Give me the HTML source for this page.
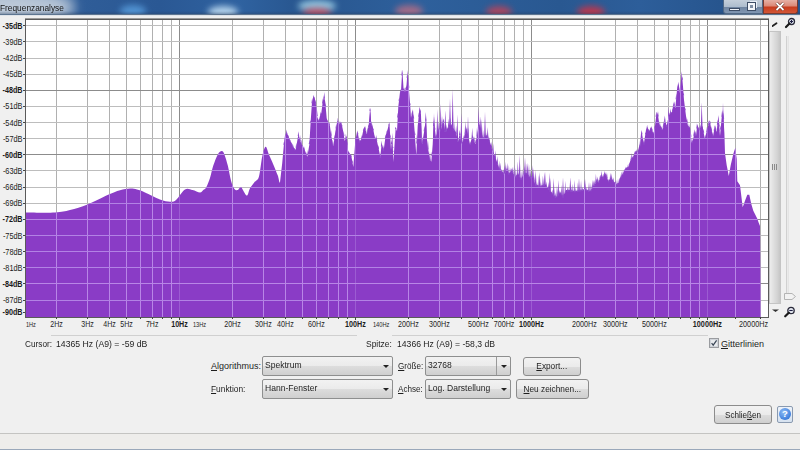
<!DOCTYPE html>
<html><head><meta charset="utf-8">
<style>
html,body{margin:0;padding:0;}
body{width:800px;height:450px;overflow:hidden;position:relative;background:#f0f0f0;font-family:"Liberation Sans",sans-serif;color:#1e1e1e;}
.abs{position:absolute;}
#title{left:0;top:0;width:800px;height:15px;overflow:hidden;
 background:linear-gradient(90deg,#9fb3ca 0px,#6f90b8 55px,#2f5d98 80px,#2a5894 160px,#2f62a0 240px,#28568f 300px,#2e609c 420px,#295891 560px,#2d5e9a 640px,#27558e 720px);}
#title .t{left:0px;top:2.6px;font-size:9px;color:#151515;white-space:nowrap;transform:scaleX(.925);transform-origin:0 0;}
.blob{position:absolute;border-radius:50%;filter:blur(4px);}
.lbl{position:absolute;font-size:9px;white-space:pre;color:#1e1e1e;}
.combo{position:absolute;box-sizing:border-box;border:1px solid #8e8f8f;border-radius:2px;background:linear-gradient(#f2f2f2 0%,#ebebeb 50%,#dddddd 51%,#cfcfcf 100%);}
.combo .v{position:absolute;left:2px;top:3px;font-size:9.2px;white-space:pre;color:#1e1e1e;transform:scaleX(.93);transform-origin:0 0;}
.combo .arr{position:absolute;right:3px;top:8px;width:0;height:0;border-left:3px solid transparent;border-right:3px solid transparent;border-top:3px solid #222;}
.btn{position:absolute;box-sizing:border-box;border:1px solid #8c8c8c;border-radius:3px;background:linear-gradient(#f2f2f2 0%,#ebebeb 50%,#dddddd 51%,#cfcfcf 100%);font-size:9px;text-align:center;color:#1e1e1e;white-space:pre;}
u{text-decoration:underline;text-underline-offset:1px;text-decoration-thickness:1px;}
</style></head>
<body>
<div id="title" class="abs">
 <div class="blob" style="left:-20px;top:-6px;width:95px;height:26px;background:#c4cfdc;opacity:.85;filter:blur(6px)"></div>
 <div class="blob" style="left:120px;top:5px;width:26px;height:12px;background:#5aa0e0;opacity:.8;filter:blur(3px)"></div>
 <div class="blob" style="left:208px;top:6px;width:30px;height:12px;background:#c8e4f8;opacity:.85;filter:blur(3px)"></div>
 <div class="blob" style="left:298px;top:0px;width:38px;height:12px;background:#a8dcf0;opacity:.8;filter:blur(3px)"></div>
 <div class="blob" style="left:303px;top:8px;width:28px;height:10px;background:#d04858;opacity:.8;filter:blur(3px)"></div>
 <div class="blob" style="left:395px;top:5px;width:28px;height:12px;background:#d07080;opacity:.7;filter:blur(3px)"></div>
 <div class="blob" style="left:486px;top:6px;width:26px;height:12px;background:#d04050;opacity:.75;filter:blur(3px)"></div>
 <div class="blob" style="left:577px;top:6px;width:28px;height:12px;background:#d83040;opacity:.8;filter:blur(3px)"></div>
 <div class="abs" style="left:0;top:11px;width:800px;height:4px;background:linear-gradient(rgba(40,60,90,0),rgba(40,60,90,.45));"></div>
 <div class="abs t">Frequenzanalyse</div>
 <div class="abs" style="left:723px;top:0;width:40px;height:14px;box-sizing:border-box;border:1px solid #506885;border-top:none;border-radius:0 0 0 3px;background:linear-gradient(#c3ceda,#aebdce 50%,#6f84a0 52%,#8096b2);"></div>
 <div class="abs" style="left:729px;top:8px;width:9px;height:1px;background:#eef2f8;border:1px solid #3d4d66;"></div>
 <div class="abs" style="left:750px;top:1px;width:7px;height:7px;box-sizing:border-box;border:1px solid #e8eef6;"></div>
 <div class="abs" style="left:748px;top:3px;width:7px;height:7px;box-sizing:border-box;border:2px solid #f4f6fa;background:#7f8ea4;box-shadow:0 0 0 1px #3d4d66;"></div>
 <div class="abs" style="left:763px;top:0;width:35px;height:14px;box-sizing:border-box;border:1px solid #7a3a30;border-top:none;border-radius:0 0 3px 0;background:linear-gradient(#e5b0a4,#dc8a78 45%,#c83c1e 55%,#d25636);"></div>
 <svg class="abs" style="left:775px;top:2px" width="10" height="9" viewBox="0 0 10 9"><path d="M1.5,1 L8.5,8 M8.5,1 L1.5,8" stroke="#5a2418" stroke-width="3"/><path d="M1.5,1 L8.5,8 M8.5,1 L1.5,8" stroke="#fff" stroke-width="1.8"/></svg>
</div>
<div class="abs" style="left:0;top:14px;width:800px;height:1px;background:#5d7590"></div>
<div class="abs" style="left:0;top:15px;width:800px;height:1px;background:#dfe4ea"></div>

<svg class="abs" style="left:0;top:0" width="800" height="450" viewBox="0 0 800 450" font-family="Liberation Sans" font-size="8">
 <defs><clipPath id="spec"><path d="M25.5,317.0 L26.00,212.50 C30.83,212.50 47.67,212.92 55.00,212.50 C62.33,212.08 64.58,211.33 70.00,210.00 C75.42,208.67 81.25,207.00 87.50,204.50 C93.75,202.00 102.08,197.38 107.50,195.00 C112.92,192.62 116.25,191.27 120.00,190.20 C123.75,189.13 127.17,188.70 130.00,188.60 C132.83,188.50 134.50,188.95 137.00,189.60 C139.50,190.25 141.17,190.85 145.00,192.50 C148.83,194.15 155.83,197.96 160.00,199.50 C164.17,201.04 167.33,201.67 170.00,201.75 C172.67,201.83 173.50,202.04 176.00,200.00 C178.50,197.96 182.25,191.17 185.00,189.50 C187.75,187.83 190.00,189.50 192.50,190.00 C195.00,190.50 198.20,192.50 200.00,192.50 C201.80,192.50 202.30,190.78 203.30,190.00 C204.30,189.22 204.88,189.80 206.00,187.80 C207.12,185.80 208.78,181.70 210.00,178.00 C211.22,174.30 212.00,169.53 213.30,165.60 C214.60,161.67 216.38,156.82 217.80,154.40 C219.22,151.98 220.70,151.10 221.80,151.10 C222.90,151.10 223.40,151.98 224.40,154.40 C225.40,156.82 226.68,161.15 227.80,165.60 C228.92,170.05 230.00,177.22 231.10,181.10 C232.20,184.98 233.28,187.42 234.40,188.90 C235.52,190.38 236.68,190.27 237.80,190.00 C238.92,189.73 239.62,186.37 241.10,187.30 C242.58,188.23 245.22,195.45 246.70,195.60 C248.18,195.75 248.72,190.43 250.00,188.20 C251.28,185.97 252.92,184.12 254.40,182.20 C255.88,180.28 257.60,180.95 258.90,176.70 C260.20,172.45 261.08,161.70 262.20,156.70 C263.32,151.70 264.48,147.08 265.60,146.70 C266.72,146.32 267.62,151.45 268.90,154.40 C270.18,157.35 271.82,160.87 273.30,164.40 C274.78,167.93 276.68,172.63 277.80,175.60 C278.92,178.57 279.27,184.25 280.00,182.20 L282.20,163.30 L284.40,138.90 L286.70,132.20 L290.00,140.00 L293.30,146.70 L295.60,150.00 L298.40,134.40 L301.10,143.30 L304.40,148.90 L307.30,156.70 L309.30,145.00 L310.70,121.00 L312.00,102.30 L313.30,96.30 L314.70,97.70 L316.00,105.00 L317.30,117.00 L318.70,121.00 L320.00,115.70 L321.30,113.00 L322.70,102.30 L324.00,95.70 L325.30,102.30 L326.70,118.30 L328.00,122.30 L329.60,123.70 L331.30,135.70 L333.30,146.30 L335.30,131.70 L337.30,121.00 L339.30,123.70 L341.30,122.30 L343.30,131.70 L344.70,141.00 L346.70,135.70 L348.00,150.30 L349.30,153.00 L351.30,155.70 L353.30,167.00 L355.30,141.00 L357.30,130.30 L359.30,141.00 L361.30,139.70 L363.30,130.30 L364.70,126.30 L366.70,134.30 L368.70,125.00 L370.00,109.00 L371.30,123.70 L372.70,126.30 L374.70,137.00 L376.70,139.70 L378.70,149.00 L380.30,156.70 L381.70,143.30 L383.70,150.00 L385.70,135.30 L387.70,129.00 L389.40,122.00 L391.00,150.00 L392.30,132.70 L393.40,162.00 L395.70,127.30 L397.00,131.30 L398.30,106.70 L400.00,92.00 L401.00,90.70 L402.30,69.50 L403.50,88.00 L405.00,92.00 L406.50,85.00 L407.70,70.00 L408.50,84.00 L410.30,106.70 L411.00,118.00 L413.00,110.00 L414.50,130.00 L416.30,155.30 L417.70,126.00 L419.70,107.00 L421.00,115.00 L422.00,144.30 L424.00,132.30 L426.00,117.70 L427.00,140.00 L428.00,148.30 L430.00,159.00 L431.30,161.70 L432.70,144.30 L434.00,116.30 L435.00,130.00 L436.00,137.70 L438.70,128.30 L440.70,131.00 L443.30,119.00 L445.30,132.30 L448.00,127.00 L450.70,123.00 L453.30,128.30 L456.00,132.30 L458.00,141.70 L460.00,132.30 L461.30,144.30 L464.00,137.70 L466.70,128.30 L470.00,144.30 L472.70,135.00 L475.30,144.30 L477.30,133.70 L479.30,124.00 L481.00,131.00 L483.00,137.70 L486.30,135.00 L488.30,137.70 L490.30,143.00 L492.30,149.70 L495.00,156.00 L497.00,162.00 L499.00,168.00 L502.00,171.00 L504.30,174.00 L507.00,168.00 L509.00,173.30 L512.00,170.00 L515.00,177.00 L518.00,173.00 L521.00,178.70 L524.00,173.30 L527.00,173.00 L530.00,177.30 L533.00,176.00 L535.00,184.00 L540.00,186.00 L545.00,184.00 L550.00,190.00 L553.00,194.00 L556.00,197.00 L560.00,192.00 L563.00,196.00 L566.00,190.00 L570.00,190.00 L575.00,191.00 L580.00,190.00 L585.00,189.00 L590.00,191.00 L595.00,184.00 L597.00,178.70 L598.30,182.70 L601.00,174.70 L603.00,177.30 L604.30,173.30 L606.30,174.70 L608.30,181.30 L611.00,177.30 L613.70,181.30 L616.30,184.00 L618.30,182.70 L620.30,177.30 L623.00,173.30 L625.70,168.00 L628.30,166.70 L631.00,158.70 L633.70,156.00 L635.70,150.70 L637.70,152.00 L639.70,144.00 L640.00,145.70 L641.30,129.70 L642.70,137.70 L644.00,143.00 L646.00,129.70 L647.30,127.00 L649.30,131.00 L651.30,126.30 L653.30,133.70 L654.70,128.30 L656.70,111.70 L658.00,115.00 L659.30,124.30 L661.30,127.00 L662.70,129.70 L664.70,119.00 L666.70,125.70 L668.70,116.30 L670.00,112.30 L672.00,112.30 L674.00,103.00 L675.30,108.30 L677.30,86.70 L678.70,84.00 L680.00,93.30 L681.70,71.30 L683.00,86.70 L684.00,100.00 L686.00,116.00 L688.00,125.70 L690.00,127.50 L691.60,142.70 L693.30,138.70 L694.70,129.30 L696.00,136.00 L697.30,124.00 L699.30,130.70 L701.00,125.00 L702.70,126.70 L704.70,138.70 L707.30,129.30 L709.70,120.00 L711.30,129.30 L713.30,136.00 L714.70,125.30 L716.70,132.00 L718.30,116.00 L720.00,136.00 L721.70,117.30 L723.00,110.00 L724.40,133.30 L725.00,153.30 L726.70,165.30 L728.80,176.00 L730.70,165.30 L733.30,154.00 L735.20,148.00 L736.70,158.70 L737.30,181.30 L740.00,185.30 L742.70,207.30 L745.30,200.00 L747.30,194.70 L749.30,194.70 L751.30,204.00 L753.30,210.70 L755.30,214.70 L757.30,218.70 L758.70,222.70 L760.00,226.00 L760.5,317.0 Z"/></clipPath></defs>
 <rect x="25.5" y="19" width="743" height="298" fill="#ffffff"/>
 <g stroke-width="1">
<line x1="56.5" y1="19.0" x2="56.5" y2="317.0" stroke="#b0b0b0"/>
<line x1="87.5" y1="19.0" x2="87.5" y2="317.0" stroke="#b0b0b0"/>
<line x1="109.5" y1="19.0" x2="109.5" y2="317.0" stroke="#b0b0b0"/>
<line x1="126.5" y1="19.0" x2="126.5" y2="317.0" stroke="#b0b0b0"/>
<line x1="140.5" y1="19.0" x2="140.5" y2="317.0" stroke="#b0b0b0"/>
<line x1="152.5" y1="19.0" x2="152.5" y2="317.0" stroke="#b0b0b0"/>
<line x1="162.5" y1="19.0" x2="162.5" y2="317.0" stroke="#b0b0b0"/>
<line x1="171.5" y1="19.0" x2="171.5" y2="317.0" stroke="#b0b0b0"/>
<line x1="179.5" y1="19.0" x2="179.5" y2="317.0" stroke="#8c8c8c"/>
<line x1="232.5" y1="19.0" x2="232.5" y2="317.0" stroke="#b0b0b0"/>
<line x1="263.5" y1="19.0" x2="263.5" y2="317.0" stroke="#b0b0b0"/>
<line x1="285.5" y1="19.0" x2="285.5" y2="317.0" stroke="#b0b0b0"/>
<line x1="302.5" y1="19.0" x2="302.5" y2="317.0" stroke="#b0b0b0"/>
<line x1="316.5" y1="19.0" x2="316.5" y2="317.0" stroke="#b0b0b0"/>
<line x1="328.5" y1="19.0" x2="328.5" y2="317.0" stroke="#b0b0b0"/>
<line x1="338.5" y1="19.0" x2="338.5" y2="317.0" stroke="#b0b0b0"/>
<line x1="347.5" y1="19.0" x2="347.5" y2="317.0" stroke="#b0b0b0"/>
<line x1="355.5" y1="19.0" x2="355.5" y2="317.0" stroke="#8c8c8c"/>
<line x1="408.5" y1="19.0" x2="408.5" y2="317.0" stroke="#b0b0b0"/>
<line x1="439.5" y1="19.0" x2="439.5" y2="317.0" stroke="#b0b0b0"/>
<line x1="461.5" y1="19.0" x2="461.5" y2="317.0" stroke="#b0b0b0"/>
<line x1="478.5" y1="19.0" x2="478.5" y2="317.0" stroke="#b0b0b0"/>
<line x1="492.5" y1="19.0" x2="492.5" y2="317.0" stroke="#b0b0b0"/>
<line x1="504.5" y1="19.0" x2="504.5" y2="317.0" stroke="#b0b0b0"/>
<line x1="514.5" y1="19.0" x2="514.5" y2="317.0" stroke="#b0b0b0"/>
<line x1="523.5" y1="19.0" x2="523.5" y2="317.0" stroke="#b0b0b0"/>
<line x1="531.5" y1="19.0" x2="531.5" y2="317.0" stroke="#8c8c8c"/>
<line x1="584.5" y1="19.0" x2="584.5" y2="317.0" stroke="#b0b0b0"/>
<line x1="615.5" y1="19.0" x2="615.5" y2="317.0" stroke="#b0b0b0"/>
<line x1="637.5" y1="19.0" x2="637.5" y2="317.0" stroke="#b0b0b0"/>
<line x1="654.5" y1="19.0" x2="654.5" y2="317.0" stroke="#b0b0b0"/>
<line x1="668.5" y1="19.0" x2="668.5" y2="317.0" stroke="#b0b0b0"/>
<line x1="680.5" y1="19.0" x2="680.5" y2="317.0" stroke="#b0b0b0"/>
<line x1="690.5" y1="19.0" x2="690.5" y2="317.0" stroke="#b0b0b0"/>
<line x1="699.5" y1="19.0" x2="699.5" y2="317.0" stroke="#b0b0b0"/>
<line x1="707.5" y1="19.0" x2="707.5" y2="317.0" stroke="#8c8c8c"/>
<line x1="760.5" y1="19.0" x2="760.5" y2="317.0" stroke="#b0b0b0"/>
<line x1="735.5" y1="19.0" x2="735.5" y2="317.0" stroke="#b0b0b0"/>
<line x1="25.5" y1="25.5" x2="768.5" y2="25.5" stroke="#bdbdbd"/>
<line x1="25.5" y1="41.5" x2="768.5" y2="41.5" stroke="#bdbdbd"/>
<line x1="25.5" y1="58.5" x2="768.5" y2="58.5" stroke="#bdbdbd"/>
<line x1="25.5" y1="74.5" x2="768.5" y2="74.5" stroke="#bdbdbd"/>
<line x1="25.5" y1="90.5" x2="768.5" y2="90.5" stroke="#8c8c8c"/>
<line x1="25.5" y1="106.5" x2="768.5" y2="106.5" stroke="#bdbdbd"/>
<line x1="25.5" y1="122.5" x2="768.5" y2="122.5" stroke="#bdbdbd"/>
<line x1="25.5" y1="138.5" x2="768.5" y2="138.5" stroke="#bdbdbd"/>
<line x1="25.5" y1="154.5" x2="768.5" y2="154.5" stroke="#8c8c8c"/>
<line x1="25.5" y1="170.5" x2="768.5" y2="170.5" stroke="#bdbdbd"/>
<line x1="25.5" y1="187.5" x2="768.5" y2="187.5" stroke="#bdbdbd"/>
<line x1="25.5" y1="203.5" x2="768.5" y2="203.5" stroke="#bdbdbd"/>
<line x1="25.5" y1="219.5" x2="768.5" y2="219.5" stroke="#8c8c8c"/>
<line x1="25.5" y1="235.5" x2="768.5" y2="235.5" stroke="#bdbdbd"/>
<line x1="25.5" y1="251.5" x2="768.5" y2="251.5" stroke="#bdbdbd"/>
<line x1="25.5" y1="267.5" x2="768.5" y2="267.5" stroke="#bdbdbd"/>
<line x1="25.5" y1="283.5" x2="768.5" y2="283.5" stroke="#8c8c8c"/>
<line x1="25.5" y1="300.5" x2="768.5" y2="300.5" stroke="#bdbdbd"/>
 </g>
 <path d="M25.5,317.0 L26.00,212.50 C30.83,212.50 47.67,212.92 55.00,212.50 C62.33,212.08 64.58,211.33 70.00,210.00 C75.42,208.67 81.25,207.00 87.50,204.50 C93.75,202.00 102.08,197.38 107.50,195.00 C112.92,192.62 116.25,191.27 120.00,190.20 C123.75,189.13 127.17,188.70 130.00,188.60 C132.83,188.50 134.50,188.95 137.00,189.60 C139.50,190.25 141.17,190.85 145.00,192.50 C148.83,194.15 155.83,197.96 160.00,199.50 C164.17,201.04 167.33,201.67 170.00,201.75 C172.67,201.83 173.50,202.04 176.00,200.00 C178.50,197.96 182.25,191.17 185.00,189.50 C187.75,187.83 190.00,189.50 192.50,190.00 C195.00,190.50 198.20,192.50 200.00,192.50 C201.80,192.50 202.30,190.78 203.30,190.00 C204.30,189.22 204.88,189.80 206.00,187.80 C207.12,185.80 208.78,181.70 210.00,178.00 C211.22,174.30 212.00,169.53 213.30,165.60 C214.60,161.67 216.38,156.82 217.80,154.40 C219.22,151.98 220.70,151.10 221.80,151.10 C222.90,151.10 223.40,151.98 224.40,154.40 C225.40,156.82 226.68,161.15 227.80,165.60 C228.92,170.05 230.00,177.22 231.10,181.10 C232.20,184.98 233.28,187.42 234.40,188.90 C235.52,190.38 236.68,190.27 237.80,190.00 C238.92,189.73 239.62,186.37 241.10,187.30 C242.58,188.23 245.22,195.45 246.70,195.60 C248.18,195.75 248.72,190.43 250.00,188.20 C251.28,185.97 252.92,184.12 254.40,182.20 C255.88,180.28 257.60,180.95 258.90,176.70 C260.20,172.45 261.08,161.70 262.20,156.70 C263.32,151.70 264.48,147.08 265.60,146.70 C266.72,146.32 267.62,151.45 268.90,154.40 C270.18,157.35 271.82,160.87 273.30,164.40 C274.78,167.93 276.68,172.63 277.80,175.60 C278.92,178.57 279.27,184.25 280.00,182.20 L282.20,163.30 L284.40,138.90 L286.70,132.20 L290.00,140.00 L293.30,146.70 L295.60,150.00 L298.40,134.40 L301.10,143.30 L304.40,148.90 L307.30,156.70 L309.30,145.00 L310.70,121.00 L312.00,102.30 L313.30,96.30 L314.70,97.70 L316.00,105.00 L317.30,117.00 L318.70,121.00 L320.00,115.70 L321.30,113.00 L322.70,102.30 L324.00,95.70 L325.30,102.30 L326.70,118.30 L328.00,122.30 L329.60,123.70 L331.30,135.70 L333.30,146.30 L335.30,131.70 L337.30,121.00 L339.30,123.70 L341.30,122.30 L343.30,131.70 L344.70,141.00 L346.70,135.70 L348.00,150.30 L349.30,153.00 L351.30,155.70 L353.30,167.00 L355.30,141.00 L357.30,130.30 L359.30,141.00 L361.30,139.70 L363.30,130.30 L364.70,126.30 L366.70,134.30 L368.70,125.00 L370.00,109.00 L371.30,123.70 L372.70,126.30 L374.70,137.00 L376.70,139.70 L378.70,149.00 L380.30,156.70 L381.70,143.30 L383.70,150.00 L385.70,135.30 L387.70,129.00 L389.40,122.00 L391.00,150.00 L392.30,132.70 L393.40,162.00 L395.70,127.30 L397.00,131.30 L398.30,106.70 L400.00,92.00 L401.00,90.70 L402.30,69.50 L403.50,88.00 L405.00,92.00 L406.50,85.00 L407.70,70.00 L408.50,84.00 L410.30,106.70 L411.00,118.00 L413.00,110.00 L414.50,130.00 L416.30,155.30 L417.70,126.00 L419.70,107.00 L421.00,115.00 L422.00,144.30 L424.00,132.30 L426.00,117.70 L427.00,140.00 L428.00,148.30 L430.00,159.00 L431.30,161.70 L432.70,144.30 L434.00,116.30 L435.00,130.00 L436.00,137.70 L438.70,128.30 L440.70,131.00 L443.30,119.00 L445.30,132.30 L448.00,127.00 L450.70,123.00 L453.30,128.30 L456.00,132.30 L458.00,141.70 L460.00,132.30 L461.30,144.30 L464.00,137.70 L466.70,128.30 L470.00,144.30 L472.70,135.00 L475.30,144.30 L477.30,133.70 L479.30,124.00 L481.00,131.00 L483.00,137.70 L486.30,135.00 L488.30,137.70 L490.30,143.00 L492.30,149.70 L495.00,156.00 L497.00,162.00 L499.00,168.00 L502.00,171.00 L504.30,174.00 L507.00,168.00 L509.00,173.30 L512.00,170.00 L515.00,177.00 L518.00,173.00 L521.00,178.70 L524.00,173.30 L527.00,173.00 L530.00,177.30 L533.00,176.00 L535.00,184.00 L540.00,186.00 L545.00,184.00 L550.00,190.00 L553.00,194.00 L556.00,197.00 L560.00,192.00 L563.00,196.00 L566.00,190.00 L570.00,190.00 L575.00,191.00 L580.00,190.00 L585.00,189.00 L590.00,191.00 L595.00,184.00 L597.00,178.70 L598.30,182.70 L601.00,174.70 L603.00,177.30 L604.30,173.30 L606.30,174.70 L608.30,181.30 L611.00,177.30 L613.70,181.30 L616.30,184.00 L618.30,182.70 L620.30,177.30 L623.00,173.30 L625.70,168.00 L628.30,166.70 L631.00,158.70 L633.70,156.00 L635.70,150.70 L637.70,152.00 L639.70,144.00 L640.00,145.70 L641.30,129.70 L642.70,137.70 L644.00,143.00 L646.00,129.70 L647.30,127.00 L649.30,131.00 L651.30,126.30 L653.30,133.70 L654.70,128.30 L656.70,111.70 L658.00,115.00 L659.30,124.30 L661.30,127.00 L662.70,129.70 L664.70,119.00 L666.70,125.70 L668.70,116.30 L670.00,112.30 L672.00,112.30 L674.00,103.00 L675.30,108.30 L677.30,86.70 L678.70,84.00 L680.00,93.30 L681.70,71.30 L683.00,86.70 L684.00,100.00 L686.00,116.00 L688.00,125.70 L690.00,127.50 L691.60,142.70 L693.30,138.70 L694.70,129.30 L696.00,136.00 L697.30,124.00 L699.30,130.70 L701.00,125.00 L702.70,126.70 L704.70,138.70 L707.30,129.30 L709.70,120.00 L711.30,129.30 L713.30,136.00 L714.70,125.30 L716.70,132.00 L718.30,116.00 L720.00,136.00 L721.70,117.30 L723.00,110.00 L724.40,133.30 L725.00,153.30 L726.70,165.30 L728.80,176.00 L730.70,165.30 L733.30,154.00 L735.20,148.00 L736.70,158.70 L737.30,181.30 L740.00,185.30 L742.70,207.30 L745.30,200.00 L747.30,194.70 L749.30,194.70 L751.30,204.00 L753.30,210.70 L755.30,214.70 L757.30,218.70 L758.70,222.70 L760.00,226.00 L760.5,317.0 Z" fill="#8a3cc6"/>
 <path d="M369.40,125.70 L370.30,108.00 L371.20,125.70 Z M411.40,118.80 L412.30,109.00 L413.20,118.80 Z M418.80,118.50 L419.70,106.70 L420.60,118.50 Z M419.80,137.51 L420.70,110.30 L421.60,137.51 Z M425.10,142.00 L426.00,117.00 L426.90,142.00 Z M433.10,139.84 L434.00,113.00 L434.90,139.84 Z M436.40,138.66 L437.30,109.00 L438.20,138.66 Z M439.80,131.65 L440.70,103.70 L441.60,131.65 Z M444.40,132.34 L445.30,110.30 L446.20,132.34 Z M449.10,127.52 L450.00,98.30 L450.90,127.52 Z M451.80,130.89 L452.70,89.00 L453.60,130.89 Z M456.40,142.29 L457.30,114.30 L458.20,142.29 Z M460.40,143.86 L461.30,113.00 L462.20,143.86 Z M464.40,138.66 L465.30,121.00 L466.20,138.66 Z M467.10,141.45 L468.00,115.70 L468.90,141.45 Z M477.80,133.76 L478.70,107.70 L479.60,133.76 Z M479.40,134.01 L480.30,116.30 L481.20,134.01 Z M480.80,138.69 L481.70,119.00 L482.60,138.69 Z M484.10,138.88 L485.00,111.70 L485.90,138.88 Z M486.80,140.76 L487.70,127.00 L488.60,140.76 Z M491.40,154.03 L492.30,148.00 L493.20,154.03 Z M494.10,161.00 L495.00,154.70 L495.90,161.00 Z M498.10,171.00 L499.00,164.00 L499.90,171.00 Z M503.40,174.70 L504.30,165.30 L505.20,174.70 Z M510.80,173.63 L511.70,168.00 L512.60,173.63 Z M518.80,180.13 L519.70,154.70 L520.60,180.13 Z M524.10,175.30 L525.00,157.30 L525.90,175.30 Z M526.80,177.44 L527.70,162.70 L528.60,177.44 Z M532.80,184.80 L533.70,168.00 L534.60,184.80 Z M534.80,186.68 L535.70,170.00 L536.60,186.68 Z M538.80,187.72 L539.70,172.00 L540.60,187.72 Z M544.10,187.20 L545.00,171.30 L545.90,187.20 Z M548.80,192.93 L549.70,172.70 L550.60,192.93 Z M552.80,197.70 L553.70,178.00 L554.60,197.70 Z M557.40,197.38 L558.30,180.00 L559.20,197.38 Z M562.10,196.67 L563.00,177.30 L563.90,196.67 Z M569.40,192.26 L570.30,177.30 L571.20,192.26 Z M578.10,192.40 L579.00,178.00 L579.90,192.40 Z M584.10,191.40 L585.00,178.70 L585.90,191.40 Z M588.10,193.00 L589.00,182.00 L589.90,193.00 Z M592.80,189.22 L593.70,180.00 L594.60,189.22 Z M667.80,123.00 L668.70,106.70 L669.60,123.00 Z M672.40,112.91 L673.30,101.30 L674.20,112.91 Z M700.80,128.70 L701.70,102.00 L702.60,128.70 Z M722.10,128.64 L723.00,102.70 L723.90,128.64 Z M717.50,130.94 L718.40,114.70 L719.30,130.94 Z" fill="#8a3cc6"/>
 <path d="M283.30,144.84 L284.00,141.38 L284.70,144.84 Z M284.65,137.63 L285.35,132.70 L286.05,137.63 Z M285.92,133.92 L286.62,129.51 L287.32,133.92 Z M287.49,137.22 L288.19,134.96 L288.89,137.22 Z M289.20,141.26 L289.90,139.09 L290.60,141.26 Z M290.83,144.61 L291.53,142.29 L292.23,144.61 Z M292.12,147.23 L292.82,143.32 L293.52,147.23 Z M294.15,150.42 L294.85,147.86 L295.55,150.42 Z M295.57,147.76 L296.27,142.94 L296.97,147.76 Z M297.72,135.96 L298.42,131.36 L299.12,135.96 Z M299.32,141.22 L300.02,134.83 L300.72,141.22 Z M300.56,145.07 L301.26,139.21 L301.96,145.07 Z M302.05,147.60 L302.75,144.95 L303.45,147.60 Z M303.37,149.84 L304.07,146.45 L304.77,149.84 Z M305.39,154.93 L306.09,152.12 L306.79,154.93 Z M307.17,154.88 L307.87,150.01 L308.57,154.88 Z M308.74,144.11 L309.44,139.65 L310.14,144.11 Z M310.00,122.47 L310.70,120.20 L311.40,122.47 Z M311.41,103.30 L312.11,98.24 L312.81,103.30 Z M313.04,98.24 L313.74,94.82 L314.44,98.24 Z M314.82,103.81 L315.52,99.77 L316.22,103.81 Z M316.32,115.92 L317.02,110.35 L317.72,115.92 Z M318.22,121.60 L318.92,118.50 L319.62,121.60 Z M319.99,115.76 L320.69,111.39 L321.39,115.76 Z M322.07,103.45 L322.77,98.16 L323.47,103.45 Z M323.56,98.51 L324.26,92.10 L324.96,98.51 Z M324.88,106.95 L325.58,103.07 L326.28,106.95 Z M326.83,122.36 L327.53,119.68 L328.23,122.36 Z M328.52,124.87 L329.22,122.69 L329.92,124.87 Z M330.39,135.72 L331.09,130.28 L331.79,135.72 Z M332.16,145.48 L332.86,139.54 L333.56,145.48 Z M333.68,139.94 L334.38,134.81 L335.08,139.94 Z M335.47,128.54 L336.17,123.93 L336.87,128.54 Z M337.13,123.21 L337.83,117.43 L338.53,123.21 Z M339.27,124.73 L339.97,120.60 L340.67,124.73 Z M341.14,126.32 L341.84,124.05 L342.54,126.32 Z M343.04,136.11 L343.74,131.19 L344.44,136.11 Z M345.23,139.24 L345.93,133.54 L346.63,139.24 Z M346.72,145.23 L347.42,141.50 L348.12,145.23 Z M348.58,154.47 L349.28,152.37 L349.98,154.47 Z M350.25,156.72 L350.95,153.97 L351.65,156.72 Z M351.56,162.64 L352.26,160.37 L352.96,162.64 Z M353.53,156.40 L354.23,153.82 L354.93,156.40 Z M354.98,140.47 L355.68,136.72 L356.38,140.47 Z M357.05,134.21 L357.75,131.84 L358.45,134.21 Z M358.70,142.44 L359.40,137.96 L360.10,142.44 Z M360.78,140.34 L361.48,134.66 L362.18,140.34 Z M362.85,131.10 L363.55,127.84 L364.25,131.10 Z M364.46,129.65 L365.16,126.03 L365.86,129.65 Z M366.55,133.26 L367.25,126.95 L367.95,133.26 Z M367.90,126.98 L368.60,124.19 L369.30,126.98 Z M369.33,110.83 L370.03,107.78 L370.73,110.83 Z M371.01,125.97 L371.71,121.32 L372.41,125.97 Z M372.48,130.35 L373.18,128.33 L373.88,130.35 Z M374.10,138.63 L374.80,134.97 L375.50,138.63 Z M375.86,141.01 L376.56,134.72 L377.26,141.01 Z M377.75,149.35 L378.45,145.03 L379.15,149.35 Z M379.57,158.06 L380.27,153.01 L380.97,158.06 Z M380.82,146.48 L381.52,140.44 L382.22,146.48 Z M382.80,150.84 L383.50,144.91 L384.20,150.84 Z M384.80,138.26 L385.50,134.49 L386.20,138.26 Z M386.40,132.39 L387.10,129.92 L387.80,132.39 Z M388.24,125.41 L388.94,123.13 L389.64,125.41 Z M389.50,137.54 L390.20,134.60 L390.90,137.54 Z M390.86,143.98 L391.56,140.45 L392.26,143.98 Z M392.12,147.98 L392.82,145.98 L393.52,147.98 Z M393.47,151.90 L394.17,149.45 L394.87,151.90 Z M395.03,128.90 L395.73,126.78 L396.43,128.90 Z M397.11,117.54 L397.81,112.77 L398.51,117.54 Z M398.46,100.81 L399.16,97.67 L399.86,100.81 Z M400.00,92.59 L400.70,88.95 L401.40,92.59 Z M401.33,75.48 L402.03,69.66 L402.73,75.48 Z M403.52,91.42 L404.22,87.32 L404.92,91.42 Z M405.20,89.29 L405.90,86.90 L406.60,89.29 Z M406.50,77.69 L407.20,74.15 L407.90,77.69 Z M407.97,87.63 L408.67,81.90 L409.37,87.63 Z M409.33,104.80 L410.03,102.70 L410.73,104.80 Z M411.48,114.77 L412.18,110.40 L412.88,114.77 Z M412.83,118.54 L413.53,114.10 L414.23,118.54 Z M414.06,135.09 L414.76,130.71 L415.46,135.09 Z M416.23,143.54 L416.93,134.13 L417.63,143.54 Z M418.13,116.77 L418.83,112.18 L419.53,116.77 Z M419.70,112.79 L420.40,108.95 L421.10,112.79 Z M421.67,143.59 L422.37,136.83 L423.07,143.59 Z M423.65,131.26 L424.35,126.12 L425.05,131.26 Z M425.07,120.87 L425.77,111.88 L426.47,120.87 Z M427.26,149.43 L427.96,140.11 L428.66,149.43 Z M429.26,160.30 L429.96,151.25 L430.66,160.30 Z M431.20,155.72 L431.90,151.41 L432.60,155.72 Z M432.92,126.00 L433.62,120.66 L434.32,126.00 Z M434.15,129.42 L434.85,126.70 L435.55,129.42 Z M435.63,138.06 L436.33,133.49 L437.03,138.06 Z M437.52,131.47 L438.22,121.32 L438.92,131.47 Z M439.17,131.38 L439.87,121.38 L440.57,131.38 Z M441.36,126.24 L442.06,116.10 L442.76,126.24 Z M442.92,122.63 L443.62,118.36 L444.32,122.63 Z M444.35,132.12 L445.05,128.04 L445.75,132.12 Z M445.75,131.54 L446.45,124.05 L447.15,131.54 Z M447.85,127.68 L448.55,118.46 L449.25,127.68 Z M449.53,125.19 L450.23,117.47 L450.93,125.19 Z M451.53,127.62 L452.23,124.44 L452.93,127.62 Z M453.39,130.97 L454.09,121.19 L454.79,130.97 Z M455.37,134.15 L456.07,125.64 L456.77,134.15 Z M457.05,142.03 L457.75,138.10 L458.45,142.03 Z M459.04,135.02 L459.74,129.86 L460.44,135.02 Z M461.04,144.72 L461.74,134.45 L462.44,144.72 Z M462.64,140.82 L463.34,135.11 L464.04,140.82 Z M464.78,134.03 L465.48,125.73 L466.18,134.03 Z M466.15,130.55 L466.85,127.03 L467.55,130.55 Z M467.51,137.10 L468.21,127.36 L468.91,137.10 Z M469.51,145.07 L470.21,141.40 L470.91,145.07 Z M471.54,138.09 L472.24,127.75 L472.94,138.09 Z M473.40,141.49 L474.10,136.19 L474.80,141.49 Z M475.14,142.92 L475.84,139.37 L476.54,142.92 Z M476.36,136.48 L477.06,126.21 L477.76,136.48 Z M478.21,127.40 L478.91,120.69 L479.61,127.40 Z M480.34,132.64 L481.04,126.67 L481.74,132.64 Z M482.41,139.11 L483.11,130.00 L483.81,139.11 Z M483.82,137.95 L484.52,133.44 L485.22,137.95 Z M485.32,136.73 L486.02,132.31 L486.72,136.73 Z M487.10,138.53 L487.80,133.96 L488.50,138.53 Z M488.72,142.18 L489.42,137.23 L490.12,142.18 Z M490.83,148.63 L491.53,141.24 L492.23,148.63 Z M492.49,153.28 L493.19,143.36 L493.89,153.28 Z M494.60,158.39 L495.30,150.26 L496.00,158.39 Z M496.71,164.74 L497.41,155.72 L498.11,164.74 Z M498.45,169.65 L499.15,160.39 L499.85,169.65 Z M499.66,170.86 L500.36,162.52 L501.06,170.86 Z M501.05,172.25 L501.75,168.70 L502.45,172.25 Z M503.05,174.78 L503.75,169.38 L504.45,174.78 Z M504.72,173.01 L505.42,161.54 L506.12,173.01 Z M506.48,169.97 L507.18,162.88 L507.88,169.97 Z M508.19,174.52 L508.89,164.91 L509.59,174.52 Z M510.18,172.73 L510.88,168.07 L511.58,172.73 Z M511.94,172.99 L512.64,166.76 L513.34,172.99 Z M513.42,176.44 L514.12,164.44 L514.82,176.44 Z M515.12,177.40 L515.82,167.72 L516.52,177.40 Z M517.08,174.79 L517.78,161.25 L518.48,174.79 Z M518.73,177.21 L519.43,166.97 L520.13,177.21 Z M520.43,179.96 L521.13,170.83 L521.83,179.96 Z M522.33,176.55 L523.03,168.08 L523.73,176.55 Z M524.06,174.72 L524.76,165.97 L525.46,174.72 Z M526.20,174.51 L526.90,163.32 L527.60,174.51 Z M528.28,177.33 L528.98,163.47 L529.68,177.33 Z M529.74,178.61 L530.44,168.96 L531.14,178.61 Z M531.88,177.68 L532.58,164.94 L533.28,177.68 Z M533.22,181.17 L533.92,176.33 L534.62,181.17 Z M534.86,185.72 L535.56,181.43 L536.26,185.72 Z M536.30,186.30 L537.00,182.00 L537.70,186.30 Z M538.17,187.05 L538.87,174.92 L539.57,187.05 Z M540.27,187.11 L540.97,181.91 L541.67,187.11 Z M542.18,186.35 L542.88,175.58 L543.58,186.35 Z M543.52,185.81 L544.22,172.60 L544.92,185.81 Z M545.69,187.17 L546.39,181.26 L547.09,187.17 Z M547.84,189.75 L548.54,181.87 L549.24,189.75 Z M549.53,191.81 L550.23,177.42 L550.93,191.81 Z M551.56,194.52 L552.26,189.24 L552.96,194.52 Z M553.20,196.40 L553.90,187.22 L554.60,196.40 Z M554.74,197.94 L555.44,192.28 L556.14,197.94 Z M556.25,197.31 L556.95,185.86 L557.65,197.31 Z M557.47,195.78 L558.17,186.19 L558.87,195.78 Z M559.11,193.73 L559.81,190.03 L560.51,193.73 Z M560.65,195.29 L561.35,184.93 L562.05,195.29 Z M562.36,197.39 L563.06,193.18 L563.76,197.39 Z M564.54,193.02 L565.24,180.84 L565.94,193.02 Z M566.71,191.50 L567.41,186.85 L568.11,191.50 Z M568.18,191.50 L568.88,187.56 L569.58,191.50 Z M570.16,191.67 L570.86,185.20 L571.56,191.67 Z M571.49,191.94 L572.19,183.79 L572.89,191.94 Z M573.60,192.36 L574.30,179.85 L575.00,192.36 Z M575.06,192.35 L575.76,187.21 L576.46,192.35 Z M577.18,191.92 L577.88,182.15 L578.58,191.92 Z M579.08,191.54 L579.78,187.06 L580.48,191.54 Z M580.34,191.29 L581.04,180.22 L581.74,191.29 Z M581.96,190.97 L582.66,186.67 L583.36,190.97 Z M584.10,190.54 L584.80,180.06 L585.50,190.54 Z M586.10,191.22 L586.80,186.80 L587.50,191.22 Z M588.16,192.04 L588.86,187.81 L589.56,192.04 Z M590.22,191.21 L590.92,182.72 L591.62,191.21 Z M591.76,189.06 L592.46,179.47 L593.16,189.06 Z M593.89,186.08 L594.59,179.63 L595.29,186.08 Z M595.21,183.08 L595.91,173.78 L596.61,183.08 Z M596.65,181.29 L597.35,176.58 L598.05,181.29 Z M598.01,182.97 L598.71,178.92 L599.41,182.97 Z M599.42,178.82 L600.12,174.76 L600.82,178.82 Z M600.92,177.01 L601.62,170.71 L602.32,177.01 Z M602.41,178.46 L603.11,173.46 L603.81,178.46 Z M603.79,174.93 L604.49,170.70 L605.19,174.93 Z M605.01,175.79 L605.71,172.03 L606.41,175.79 Z M606.22,178.26 L606.92,172.09 L607.62,178.26 Z M607.97,182.25 L608.67,178.80 L609.37,182.25 Z M609.65,179.77 L610.35,172.59 L611.05,179.77 Z M610.95,179.77 L611.65,173.18 L612.35,179.77 Z M612.59,182.19 L613.29,177.21 L613.99,182.19 Z M614.62,184.48 L615.32,180.02 L616.02,184.48 Z M616.33,185.03 L617.03,179.09 L617.73,185.03 Z M618.51,181.74 L619.21,177.53 L619.91,181.74 Z M620.54,177.40 L621.24,171.37 L621.94,177.40 Z M622.38,174.64 L623.08,170.12 L623.78,174.64 Z M623.93,171.61 L624.63,168.84 L625.33,171.61 Z M625.26,169.37 L625.96,166.52 L626.66,169.37 Z M627.20,168.40 L627.90,164.62 L628.60,168.40 Z M628.56,165.35 L629.26,162.43 L629.96,165.35 Z M630.60,159.90 L631.30,153.05 L632.00,159.90 Z M632.47,158.03 L633.17,154.12 L633.87,158.03 Z M633.91,155.08 L634.61,151.11 L635.31,155.08 Z M635.57,152.57 L636.27,149.29 L636.97,152.57 Z M637.22,152.62 L637.92,148.80 L638.62,152.62 Z M639.38,146.20 L640.08,139.82 L640.78,146.20 Z M641.13,134.22 L641.83,131.12 L642.53,134.22 Z M643.29,144.48 L643.99,141.08 L644.69,144.48 Z M644.85,134.19 L645.55,132.18 L646.25,134.19 Z M646.43,128.85 L647.13,124.71 L647.83,128.85 Z M648.14,131.57 L648.84,128.67 L649.54,131.57 Z M649.84,129.59 L650.54,127.56 L651.24,129.59 Z M651.30,130.41 L652.00,128.00 L652.70,130.41 Z M652.90,134.03 L653.60,131.84 L654.30,134.03 Z M654.13,128.75 L654.83,125.38 L655.53,128.75 Z M655.56,116.86 L656.26,112.22 L656.96,116.86 Z M657.29,116.47 L657.99,111.09 L658.69,116.47 Z M659.15,126.54 L659.85,121.31 L660.55,126.54 Z M661.22,129.71 L661.92,125.95 L662.62,129.71 Z M662.75,127.18 L663.45,120.75 L664.15,127.18 Z M664.10,120.84 L664.80,115.58 L665.50,120.84 Z M665.94,127.01 L666.64,124.81 L667.34,127.01 Z M667.98,117.90 L668.68,111.88 L669.38,117.90 Z M669.81,113.80 L670.51,108.50 L671.21,113.80 Z M671.82,111.39 L672.52,108.76 L673.22,111.39 Z M673.54,105.49 L674.24,101.22 L674.94,105.49 Z M675.58,99.25 L676.28,93.62 L676.98,99.25 Z M677.60,86.26 L678.30,81.64 L679.00,86.26 Z M679.70,89.67 L680.40,84.60 L681.10,89.67 Z M681.59,79.79 L682.29,76.75 L682.99,79.79 Z M682.82,95.13 L683.52,92.53 L684.22,95.13 Z M684.38,110.15 L685.08,107.68 L685.78,110.15 Z M686.42,122.92 L687.12,118.41 L687.82,122.92 Z M688.25,128.05 L688.95,123.23 L689.65,128.05 Z M690.13,136.85 L690.83,132.64 L691.53,136.85 Z M691.33,143.19 L692.03,137.60 L692.73,143.19 Z M693.28,135.65 L693.98,131.39 L694.68,135.65 Z M695.01,136.02 L695.71,131.05 L696.41,136.02 Z M696.28,128.47 L696.98,123.15 L697.68,128.47 Z M697.73,129.29 L698.43,126.95 L699.13,129.29 Z M699.20,130.20 L699.90,124.92 L700.60,130.20 Z M700.60,126.80 L701.30,121.47 L702.00,126.80 Z M702.78,132.86 L703.48,128.64 L704.18,132.86 Z M704.36,138.90 L705.06,134.74 L705.76,138.90 Z M706.24,132.09 L706.94,126.64 L707.64,132.09 Z M708.06,125.14 L708.76,120.25 L709.46,125.14 Z M709.34,123.47 L710.04,120.80 L710.74,123.47 Z M710.79,131.44 L711.49,126.10 L712.19,131.44 Z M712.30,136.48 L713.00,131.93 L713.70,136.48 Z M713.51,130.55 L714.21,128.28 L714.91,130.55 Z M714.98,130.08 L715.68,125.05 L716.38,130.08 Z M716.87,124.80 L717.57,119.76 L718.27,124.80 Z M718.36,126.45 L719.06,122.13 L719.76,126.45 Z M720.03,129.52 L720.73,125.42 L721.43,129.52 Z M721.34,116.87 L722.04,110.85 L722.74,116.87 Z M722.74,118.88 L723.44,112.48 L724.14,118.88 Z" fill="#9050cc"/>
 <g stroke-width="1" clip-path="url(#spec)">
<line x1="56.5" y1="19.0" x2="56.5" y2="317.0" stroke="#b886e6"/>
<line x1="87.5" y1="19.0" x2="87.5" y2="317.0" stroke="#b886e6"/>
<line x1="109.5" y1="19.0" x2="109.5" y2="317.0" stroke="#b886e6"/>
<line x1="126.5" y1="19.0" x2="126.5" y2="317.0" stroke="#b886e6"/>
<line x1="140.5" y1="19.0" x2="140.5" y2="317.0" stroke="#b886e6"/>
<line x1="152.5" y1="19.0" x2="152.5" y2="317.0" stroke="#b886e6"/>
<line x1="162.5" y1="19.0" x2="162.5" y2="317.0" stroke="#b886e6"/>
<line x1="171.5" y1="19.0" x2="171.5" y2="317.0" stroke="#b886e6"/>
<line x1="179.5" y1="19.0" x2="179.5" y2="317.0" stroke="#9c5cd2"/>
<line x1="232.5" y1="19.0" x2="232.5" y2="317.0" stroke="#b886e6"/>
<line x1="263.5" y1="19.0" x2="263.5" y2="317.0" stroke="#b886e6"/>
<line x1="285.5" y1="19.0" x2="285.5" y2="317.0" stroke="#b886e6"/>
<line x1="302.5" y1="19.0" x2="302.5" y2="317.0" stroke="#b886e6"/>
<line x1="316.5" y1="19.0" x2="316.5" y2="317.0" stroke="#b886e6"/>
<line x1="328.5" y1="19.0" x2="328.5" y2="317.0" stroke="#b886e6"/>
<line x1="338.5" y1="19.0" x2="338.5" y2="317.0" stroke="#b886e6"/>
<line x1="347.5" y1="19.0" x2="347.5" y2="317.0" stroke="#b886e6"/>
<line x1="355.5" y1="19.0" x2="355.5" y2="317.0" stroke="#9c5cd2"/>
<line x1="408.5" y1="19.0" x2="408.5" y2="317.0" stroke="#b886e6"/>
<line x1="439.5" y1="19.0" x2="439.5" y2="317.0" stroke="#b886e6"/>
<line x1="461.5" y1="19.0" x2="461.5" y2="317.0" stroke="#b886e6"/>
<line x1="478.5" y1="19.0" x2="478.5" y2="317.0" stroke="#b886e6"/>
<line x1="492.5" y1="19.0" x2="492.5" y2="317.0" stroke="#b886e6"/>
<line x1="504.5" y1="19.0" x2="504.5" y2="317.0" stroke="#b886e6"/>
<line x1="514.5" y1="19.0" x2="514.5" y2="317.0" stroke="#b886e6"/>
<line x1="523.5" y1="19.0" x2="523.5" y2="317.0" stroke="#b886e6"/>
<line x1="531.5" y1="19.0" x2="531.5" y2="317.0" stroke="#9c5cd2"/>
<line x1="584.5" y1="19.0" x2="584.5" y2="317.0" stroke="#b886e6"/>
<line x1="615.5" y1="19.0" x2="615.5" y2="317.0" stroke="#b886e6"/>
<line x1="637.5" y1="19.0" x2="637.5" y2="317.0" stroke="#b886e6"/>
<line x1="654.5" y1="19.0" x2="654.5" y2="317.0" stroke="#b886e6"/>
<line x1="668.5" y1="19.0" x2="668.5" y2="317.0" stroke="#b886e6"/>
<line x1="680.5" y1="19.0" x2="680.5" y2="317.0" stroke="#b886e6"/>
<line x1="690.5" y1="19.0" x2="690.5" y2="317.0" stroke="#b886e6"/>
<line x1="699.5" y1="19.0" x2="699.5" y2="317.0" stroke="#b886e6"/>
<line x1="707.5" y1="19.0" x2="707.5" y2="317.0" stroke="#9c5cd2"/>
<line x1="760.5" y1="19.0" x2="760.5" y2="317.0" stroke="#b886e6"/>
<line x1="735.5" y1="19.0" x2="735.5" y2="317.0" stroke="#b886e6"/>
<line x1="25.5" y1="25.5" x2="768.5" y2="25.5" stroke="#b282e4"/>
<line x1="25.5" y1="41.5" x2="768.5" y2="41.5" stroke="#b282e4"/>
<line x1="25.5" y1="58.5" x2="768.5" y2="58.5" stroke="#b282e4"/>
<line x1="25.5" y1="74.5" x2="768.5" y2="74.5" stroke="#b282e4"/>
<line x1="25.5" y1="90.5" x2="768.5" y2="90.5" stroke="#b886e6"/>
<line x1="25.5" y1="106.5" x2="768.5" y2="106.5" stroke="#b282e4"/>
<line x1="25.5" y1="122.5" x2="768.5" y2="122.5" stroke="#b282e4"/>
<line x1="25.5" y1="138.5" x2="768.5" y2="138.5" stroke="#b282e4"/>
<line x1="25.5" y1="154.5" x2="768.5" y2="154.5" stroke="#b886e6"/>
<line x1="25.5" y1="170.5" x2="768.5" y2="170.5" stroke="#b282e4"/>
<line x1="25.5" y1="187.5" x2="768.5" y2="187.5" stroke="#b282e4"/>
<line x1="25.5" y1="203.5" x2="768.5" y2="203.5" stroke="#b282e4"/>
<line x1="25.5" y1="219.5" x2="768.5" y2="219.5" stroke="#b886e6"/>
<line x1="25.5" y1="235.5" x2="768.5" y2="235.5" stroke="#b282e4"/>
<line x1="25.5" y1="251.5" x2="768.5" y2="251.5" stroke="#b282e4"/>
<line x1="25.5" y1="267.5" x2="768.5" y2="267.5" stroke="#b282e4"/>
<line x1="25.5" y1="283.5" x2="768.5" y2="283.5" stroke="#b886e6"/>
<line x1="25.5" y1="300.5" x2="768.5" y2="300.5" stroke="#b282e4"/>
 </g>
 <rect x="25.5" y="19.5" width="743" height="298" fill="none" stroke="#5a5a5a" stroke-width="1"/>
 <line x1="25" y1="18.5" x2="769" y2="18.5" stroke="#9a9a9a"/>
 <g fill="#1a1a1a" font-size="8.4">
<text x="22.5" y="28.8" text-anchor="end" font-weight="bold" textLength="20" lengthAdjust="spacingAndGlyphs">-35dB</text>
<line x1="23" y1="25.5" x2="25" y2="25.5" stroke="#444"/>
<text x="22.5" y="44.9" text-anchor="end" font-weight="normal" textLength="19.6" lengthAdjust="spacingAndGlyphs">-39dB</text>
<line x1="23" y1="41.5" x2="25" y2="41.5" stroke="#444"/>
<text x="22.5" y="61.1" text-anchor="end" font-weight="normal" textLength="19.6" lengthAdjust="spacingAndGlyphs">-42dB</text>
<line x1="23" y1="58.5" x2="25" y2="58.5" stroke="#444"/>
<text x="22.5" y="77.2" text-anchor="end" font-weight="normal" textLength="19.6" lengthAdjust="spacingAndGlyphs">-45dB</text>
<line x1="23" y1="74.5" x2="25" y2="74.5" stroke="#444"/>
<text x="22.5" y="93.3" text-anchor="end" font-weight="bold" textLength="20" lengthAdjust="spacingAndGlyphs">-48dB</text>
<line x1="23" y1="90.5" x2="25" y2="90.5" stroke="#444"/>
<text x="22.5" y="109.4" text-anchor="end" font-weight="normal" textLength="19.6" lengthAdjust="spacingAndGlyphs">-51dB</text>
<line x1="23" y1="106.5" x2="25" y2="106.5" stroke="#444"/>
<text x="22.5" y="125.6" text-anchor="end" font-weight="normal" textLength="19.6" lengthAdjust="spacingAndGlyphs">-54dB</text>
<line x1="23" y1="122.5" x2="25" y2="122.5" stroke="#444"/>
<text x="22.5" y="141.7" text-anchor="end" font-weight="normal" textLength="19.6" lengthAdjust="spacingAndGlyphs">-57dB</text>
<line x1="23" y1="138.5" x2="25" y2="138.5" stroke="#444"/>
<text x="22.5" y="157.8" text-anchor="end" font-weight="bold" textLength="20" lengthAdjust="spacingAndGlyphs">-60dB</text>
<line x1="23" y1="154.5" x2="25" y2="154.5" stroke="#444"/>
<text x="22.5" y="174.0" text-anchor="end" font-weight="normal" textLength="19.6" lengthAdjust="spacingAndGlyphs">-63dB</text>
<line x1="23" y1="170.5" x2="25" y2="170.5" stroke="#444"/>
<text x="22.5" y="190.1" text-anchor="end" font-weight="normal" textLength="19.6" lengthAdjust="spacingAndGlyphs">-66dB</text>
<line x1="23" y1="187.5" x2="25" y2="187.5" stroke="#444"/>
<text x="22.5" y="206.2" text-anchor="end" font-weight="normal" textLength="19.6" lengthAdjust="spacingAndGlyphs">-69dB</text>
<line x1="23" y1="203.5" x2="25" y2="203.5" stroke="#444"/>
<text x="22.5" y="222.4" text-anchor="end" font-weight="bold" textLength="20" lengthAdjust="spacingAndGlyphs">-72dB</text>
<line x1="23" y1="219.5" x2="25" y2="219.5" stroke="#444"/>
<text x="22.5" y="238.5" text-anchor="end" font-weight="normal" textLength="19.6" lengthAdjust="spacingAndGlyphs">-75dB</text>
<line x1="23" y1="235.5" x2="25" y2="235.5" stroke="#444"/>
<text x="22.5" y="254.6" text-anchor="end" font-weight="normal" textLength="19.6" lengthAdjust="spacingAndGlyphs">-78dB</text>
<line x1="23" y1="251.5" x2="25" y2="251.5" stroke="#444"/>
<text x="22.5" y="270.8" text-anchor="end" font-weight="normal" textLength="19.6" lengthAdjust="spacingAndGlyphs">-81dB</text>
<line x1="23" y1="267.5" x2="25" y2="267.5" stroke="#444"/>
<text x="22.5" y="286.9" text-anchor="end" font-weight="bold" textLength="20" lengthAdjust="spacingAndGlyphs">-84dB</text>
<line x1="23" y1="283.5" x2="25" y2="283.5" stroke="#444"/>
<text x="22.5" y="303.0" text-anchor="end" font-weight="normal" textLength="19.6" lengthAdjust="spacingAndGlyphs">-87dB</text>
<line x1="23" y1="300.5" x2="25" y2="300.5" stroke="#444"/>
<text x="22.5" y="315.0" text-anchor="end" font-weight="bold" textLength="20" lengthAdjust="spacingAndGlyphs">-90dB</text>
<line x1="23" y1="312.5" x2="25" y2="312.5" stroke="#444"/>
 </g>
<line x1="56.5" y1="317" x2="56.5" y2="319" stroke="#444"/>
<line x1="87.5" y1="317" x2="87.5" y2="319" stroke="#444"/>
<line x1="109.5" y1="317" x2="109.5" y2="319" stroke="#444"/>
<line x1="126.5" y1="317" x2="126.5" y2="319" stroke="#444"/>
<line x1="140.5" y1="317" x2="140.5" y2="319" stroke="#444"/>
<line x1="152.5" y1="317" x2="152.5" y2="319" stroke="#444"/>
<line x1="162.5" y1="317" x2="162.5" y2="319" stroke="#444"/>
<line x1="171.5" y1="317" x2="171.5" y2="319" stroke="#444"/>
<line x1="179.5" y1="317" x2="179.5" y2="320" stroke="#444"/>
<line x1="232.5" y1="317" x2="232.5" y2="319" stroke="#444"/>
<line x1="263.5" y1="317" x2="263.5" y2="319" stroke="#444"/>
<line x1="285.5" y1="317" x2="285.5" y2="319" stroke="#444"/>
<line x1="302.5" y1="317" x2="302.5" y2="319" stroke="#444"/>
<line x1="316.5" y1="317" x2="316.5" y2="319" stroke="#444"/>
<line x1="328.5" y1="317" x2="328.5" y2="319" stroke="#444"/>
<line x1="338.5" y1="317" x2="338.5" y2="319" stroke="#444"/>
<line x1="347.5" y1="317" x2="347.5" y2="319" stroke="#444"/>
<line x1="355.5" y1="317" x2="355.5" y2="320" stroke="#444"/>
<line x1="408.5" y1="317" x2="408.5" y2="319" stroke="#444"/>
<line x1="439.5" y1="317" x2="439.5" y2="319" stroke="#444"/>
<line x1="461.5" y1="317" x2="461.5" y2="319" stroke="#444"/>
<line x1="478.5" y1="317" x2="478.5" y2="319" stroke="#444"/>
<line x1="492.5" y1="317" x2="492.5" y2="319" stroke="#444"/>
<line x1="504.5" y1="317" x2="504.5" y2="319" stroke="#444"/>
<line x1="514.5" y1="317" x2="514.5" y2="319" stroke="#444"/>
<line x1="523.5" y1="317" x2="523.5" y2="319" stroke="#444"/>
<line x1="531.5" y1="317" x2="531.5" y2="320" stroke="#444"/>
<line x1="584.5" y1="317" x2="584.5" y2="319" stroke="#444"/>
<line x1="615.5" y1="317" x2="615.5" y2="319" stroke="#444"/>
<line x1="637.5" y1="317" x2="637.5" y2="319" stroke="#444"/>
<line x1="654.5" y1="317" x2="654.5" y2="319" stroke="#444"/>
<line x1="668.5" y1="317" x2="668.5" y2="319" stroke="#444"/>
<line x1="680.5" y1="317" x2="680.5" y2="319" stroke="#444"/>
<line x1="690.5" y1="317" x2="690.5" y2="319" stroke="#444"/>
<line x1="699.5" y1="317" x2="699.5" y2="319" stroke="#444"/>
<line x1="707.5" y1="317" x2="707.5" y2="320" stroke="#444"/>
<line x1="760.5" y1="317" x2="760.5" y2="319" stroke="#444"/>
<line x1="735.5" y1="317" x2="735.5" y2="319" stroke="#444"/>
 <g fill="#1e1e1e">
<text x="26.0" y="327.3" text-anchor="start" font-weight="normal" font-size="6.8" textLength="9.9" lengthAdjust="spacingAndGlyphs">1Hz</text>
<text x="56.5" y="327.3" text-anchor="middle" font-weight="normal" font-size="8.2" textLength="12.5" lengthAdjust="spacingAndGlyphs">2Hz</text>
<text x="87.5" y="327.3" text-anchor="middle" font-weight="normal" font-size="8.2" textLength="12.5" lengthAdjust="spacingAndGlyphs">3Hz</text>
<text x="109.5" y="327.3" text-anchor="middle" font-weight="normal" font-size="8.2" textLength="12.5" lengthAdjust="spacingAndGlyphs">4Hz</text>
<text x="126.5" y="327.3" text-anchor="middle" font-weight="normal" font-size="8.2" textLength="12.5" lengthAdjust="spacingAndGlyphs">5Hz</text>
<text x="152.2" y="327.3" text-anchor="middle" font-weight="normal" font-size="8.2" textLength="12.5" lengthAdjust="spacingAndGlyphs">7Hz</text>
<text x="179.5" y="327.3" text-anchor="middle" font-weight="bold" font-size="8.2" textLength="16.6" lengthAdjust="spacingAndGlyphs">10Hz</text>
<text x="199.5" y="327.3" text-anchor="middle" font-weight="normal" font-size="6.8" textLength="13.2" lengthAdjust="spacingAndGlyphs">13Hz</text>
<text x="232.5" y="327.3" text-anchor="middle" font-weight="normal" font-size="8.2" textLength="16.6" lengthAdjust="spacingAndGlyphs">20Hz</text>
<text x="263.4" y="327.3" text-anchor="middle" font-weight="normal" font-size="8.2" textLength="16.6" lengthAdjust="spacingAndGlyphs">30Hz</text>
<text x="285.4" y="327.3" text-anchor="middle" font-weight="normal" font-size="8.2" textLength="16.6" lengthAdjust="spacingAndGlyphs">40Hz</text>
<text x="316.4" y="327.3" text-anchor="middle" font-weight="normal" font-size="8.2" textLength="16.6" lengthAdjust="spacingAndGlyphs">60Hz</text>
<text x="355.4" y="327.3" text-anchor="middle" font-weight="bold" font-size="8.2" textLength="20.7" lengthAdjust="spacingAndGlyphs">100Hz</text>
<text x="381.2" y="327.3" text-anchor="middle" font-weight="normal" font-size="6.8" textLength="16.5" lengthAdjust="spacingAndGlyphs">140Hz</text>
<text x="408.4" y="327.3" text-anchor="middle" font-weight="normal" font-size="8.2" textLength="20.7" lengthAdjust="spacingAndGlyphs">200Hz</text>
<text x="439.4" y="327.3" text-anchor="middle" font-weight="normal" font-size="8.2" textLength="20.7" lengthAdjust="spacingAndGlyphs">300Hz</text>
<text x="478.4" y="327.3" text-anchor="middle" font-weight="normal" font-size="8.2" textLength="20.7" lengthAdjust="spacingAndGlyphs">500Hz</text>
<text x="504.1" y="327.3" text-anchor="middle" font-weight="normal" font-size="8.2" textLength="20.7" lengthAdjust="spacingAndGlyphs">700Hz</text>
<text x="531.4" y="327.3" text-anchor="middle" font-weight="bold" font-size="8.2" textLength="24.8" lengthAdjust="spacingAndGlyphs">1000Hz</text>
<text x="584.4" y="327.3" text-anchor="middle" font-weight="normal" font-size="8.2" textLength="24.8" lengthAdjust="spacingAndGlyphs">2000Hz</text>
<text x="615.3" y="327.3" text-anchor="middle" font-weight="normal" font-size="8.2" textLength="24.8" lengthAdjust="spacingAndGlyphs">3000Hz</text>
<text x="654.4" y="327.3" text-anchor="middle" font-weight="normal" font-size="8.2" textLength="24.8" lengthAdjust="spacingAndGlyphs">5000Hz</text>
<text x="707.3" y="327.3" text-anchor="middle" font-weight="bold" font-size="8.2" textLength="28.9" lengthAdjust="spacingAndGlyphs">10000Hz</text>
<text x="768.0" y="327.3" text-anchor="end" font-weight="normal" font-size="8.2" textLength="28.9" lengthAdjust="spacingAndGlyphs">20000Hz</text>
 </g>
</svg>

<!-- right controls -->
<div class="abs" style="left:769px;top:31px;width:12px;height:273px;box-sizing:border-box;border:1px solid #c4c4c4;background:linear-gradient(90deg,#ececec,#dedede 40%,#d2d2d2 75%,#c6c6c6);"></div>
<div class="abs" style="left:772px;top:164px;width:1px;height:6px;background:#8a8a8a;box-shadow:2px 0 0 #8a8a8a,4px 0 0 #8a8a8a;"></div>
<svg class="abs" style="left:772px;top:22px" width="6" height="5" viewBox="0 0 6 5"><path d="M0.5,4 L4.5,1.2" stroke="#222" stroke-width="1.8" stroke-linecap="round"/></svg>
<svg class="abs" style="left:772px;top:309px" width="7" height="3" viewBox="0 0 7 3"><path d="M0,0.5 L7,0.5 L3.5,3 Z" fill="#333"/></svg>
<div class="abs" style="left:786px;top:36px;width:3px;height:258px;box-sizing:border-box;border-left:1px solid #d0d0d0;border-right:1px solid #e4e4e4;background:#eaeaea;"></div>
<svg class="abs" style="left:783px;top:292px" width="14" height="9" viewBox="0 0 14 9"><path d="M1.5,1.5 L9,1.5 L12.5,4.5 L9,7.5 L1.5,7.5 Z" fill="#f2f2f2" stroke="#b4b4b4"/></svg>
<svg class="abs" style="left:783px;top:16px" width="14" height="14" viewBox="0 0 14 14"><circle cx="8.5" cy="5.5" r="3" fill="#dfe6f2" stroke="#2a2a3a" stroke-width="1.3"/><path d="M6.5,7.5 L3,11" stroke="#1a1a1a" stroke-width="2.2" stroke-linecap="round"/><path d="M7,5.5 L10,5.5 M8.5,4 L8.5,7" stroke="#1a1a40" stroke-width="1.1"/></svg>
<svg class="abs" style="left:782px;top:305px" width="14" height="14" viewBox="0 0 14 14"><circle cx="9" cy="5.5" r="3.2" fill="#e6eaf2" stroke="#2a2a3a" stroke-width="1.3"/><path d="M6.8,7.8 L3.2,11.3" stroke="#1a1a1a" stroke-width="2.2" stroke-linecap="round"/><path d="M7.3,5.5 L10.7,5.5" stroke="#1a1a40" stroke-width="1.1"/></svg>

<!-- cursor / peak -->
<div class="abs" style="left:51px;top:335px;width:306px;height:1px;background:#d0d0d0"></div>
<div class="abs" style="left:392px;top:335px;width:316px;height:1px;background:#d0d0d0"></div>
<div class="lbl" style="left:25px;top:338.6px;transform:scaleX(.915);transform-origin:0 0;">Cursor:</div>
<div class="lbl" style="left:55.8px;top:338.6px;transform:scaleX(.963);transform-origin:0 0;">14365 Hz (A9) = -59 dB</div>
<div class="lbl" style="left:366px;top:338.6px;transform:scaleX(.94);transform-origin:0 0;">Spitze:</div>
<div class="lbl" style="left:396.5px;top:338.6px;transform:scaleX(.958);transform-origin:0 0;">14366 Hz (A9) = -58,3 dB</div>
<svg class="abs" style="left:709px;top:338px" width="10" height="10" viewBox="0 0 10 10"><rect x="0.5" y="0.5" width="9" height="9" fill="#e9ebee" stroke="#9a9ca0"/><rect x="1.5" y="1.5" width="7" height="7" fill="none" stroke="#d0d4da"/><path d="M2.6,5.2 L4.2,7.2 L7.6,2.4" fill="none" stroke="#3a4656" stroke-width="1.2"/></svg>
<div class="lbl" style="left:721px;top:339px;"><u>G</u>itterlinien</div>

<!-- controls -->
<div class="lbl" style="left:211px;top:361px;"><u>A</u>lgorithmus:</div>
<div class="combo" style="left:262px;top:356px;width:131px;height:20px;"><div class="v">Spektrum</div><div class="arr"></div></div>
<div class="lbl" style="left:211px;top:384px;transform:scaleX(.93);transform-origin:0 0;"><u>F</u>unktion:</div>
<div class="combo" style="left:262px;top:379px;width:131px;height:20px;"><div class="v">Hann-Fenster</div><div class="arr"></div></div>

<div class="lbl" style="left:397.5px;top:361px;transform:scaleX(.9);transform-origin:0 0;"><u>G</u>röße:</div>
<div class="combo" style="left:425px;top:356px;width:86px;height:20px;"><div class="abs" style="left:0;top:0;width:71px;height:18px;box-sizing:border-box;border-right:1px solid #9a9a9a;"></div><div class="v">32768</div><div class="arr"></div></div>
<div class="lbl" style="left:397.5px;top:384px;transform:scaleX(.9);transform-origin:0 0;"><u>A</u>chse:</div>
<div class="combo" style="left:425px;top:379px;width:86px;height:20px;"><div class="v">Log. Darstellung</div><div class="arr"></div></div>

<div class="btn" style="left:523px;top:357px;width:58px;height:19px;line-height:17px;"><span style="display:inline-block;transform:scaleX(.92)"><u>E</u>xport...</span></div>
<div class="btn" style="left:516px;top:379px;width:73px;height:20px;line-height:18px;"><span style="display:inline-block;transform:scaleX(.92)"><u>N</u>eu zeichnen...</span></div>

<div class="btn" style="left:714px;top:405px;width:58px;height:19px;line-height:18px;"><span style="display:inline-block;transform:scaleX(.9)">Schlie<u>ß</u>en</span></div>
<div class="abs" style="left:777px;top:406px;width:16px;height:17px;box-sizing:border-box;border:1px solid #8a9ab0;border-radius:2px;background:linear-gradient(#eef3fa,#d6e2f0);"></div>
<div class="abs" style="left:779px;top:408px;width:12px;height:12px;border-radius:50%;background:radial-gradient(circle at 40% 35%,#8fbcf5,#3f7fdc 70%,#2d63bd);"></div>
<div class="abs" style="left:782px;top:408px;font:bold 9.5px 'Liberation Sans',sans-serif;color:#fff;">?</div>

<div class="abs" style="left:0;top:433px;width:800px;height:1px;background:#c4c4c2"></div>
<div class="abs" style="left:0;top:434px;width:800px;height:15px;background:#eeedeb"></div>
<div class="abs" style="left:0;top:448.5px;width:800px;height:1.5px;background:#9aa8ba"></div>
</body></html>
